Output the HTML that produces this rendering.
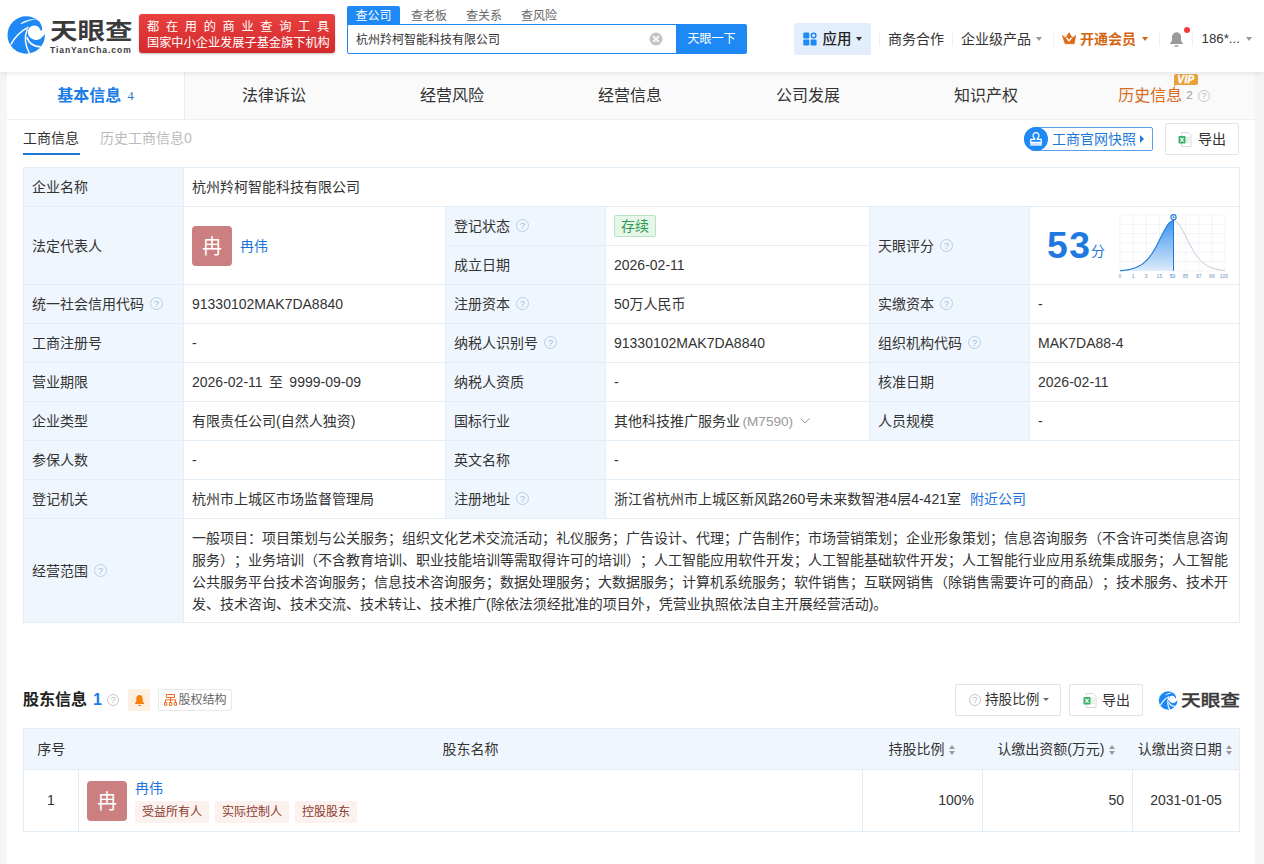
<!DOCTYPE html>
<html lang="zh-CN">
<head>
<meta charset="utf-8">
<title>杭州羚柯智能科技有限公司 - 天眼查</title>
<style>
*{box-sizing:border-box;margin:0;padding:0}
html,body{width:1264px;height:864px;overflow:hidden}
body{background:#f5f5f5;text-spacing-trim:space-all;font-family:"Liberation Sans","Noto Sans CJK SC",sans-serif;font-size:14px;color:#333;position:relative;line-height:1}
.abs{position:absolute}
a{color:#1c74dc;text-decoration:none}
/* header */
#hd{position:absolute;left:0;top:0;width:1264px;height:72px;background:#fff;box-shadow:0 1px 6px rgba(0,0,0,.10);z-index:5}
#main{position:absolute;left:7px;top:72px;width:1248px;height:800px;background:#fff}
/* tabs */
#tabs{position:absolute;left:0;top:0;width:1248px;height:48px;background:#fafafa;border-bottom:1px solid #efefef}
#tabs .t{position:absolute;top:0;height:48px;width:178px;text-align:center;line-height:47px;font-size:16px;color:#333;white-space:nowrap}
#tabs .t.on{background:#fff;color:#1a7ce6;font-weight:bold;border-right:1px solid #eee;height:47px}
/* info table */
table{border-collapse:collapse;table-layout:fixed}
#t1{position:absolute;left:16px;top:95px;width:1216px}
#t1 td{border:1px solid #e3edf6;height:39px;padding:0 8px 0 8px;font-size:14px;vertical-align:middle;white-space:nowrap;line-height:20px}
#t1 td.l{background:#f0f6fd;color:#333}
.q{display:inline-block;width:13px;height:13px;border:1px solid #b8cfe6;border-radius:50%;vertical-align:-1px;margin-left:6px;position:relative}
.q:after{content:"?";position:absolute;left:0;top:0;width:11px;line-height:11px;text-align:center;font-size:9.500px;color:#9dbbd8;font-family:"Liberation Sans",sans-serif}
.q.g{border-color:#c8c8c8;width:12px;height:12px}.q.g:after{color:#bbb;width:10px;line-height:10px;font-size:9px}
.av{display:inline-block;width:40px;height:40px;border-radius:4px;background:#cb7f80;color:#fff;font-size:20px;line-height:43px;text-align:center;vertical-align:middle}
/* t2 */
#t2{position:absolute;left:16px;top:656px;width:1216px}
#t2 th{background:#f0f6fd;height:41px;font-weight:normal;font-size:14px;color:#333;border:1px solid #e3edf6;border-left:none;border-right:none}
#t2 td{height:62px;border:1px solid #e3edf6;font-size:14px;padding-bottom:2px}
.btn{position:absolute;border:1px solid #e4e4e4;border-radius:2px;background:#fff;font-size:14px;color:#333}
.tag{display:inline-block;height:22px;line-height:22px;padding:0 7px;background:#fbf1ee;color:#8a3b2b;font-size:12px;border-radius:2px;margin-right:6px}
.sort{display:inline-block;width:6px;height:10px;position:relative;margin-left:4px;vertical-align:-1px}
.sort:before{content:"";position:absolute;left:0;top:0;border:3px solid transparent;border-bottom:4px solid #9a9a9e;border-top:none}
.sort:after{content:"";position:absolute;left:0;bottom:0;border:3px solid transparent;border-top:4px solid #9a9a9e;border-bottom:none}
</style>
</head>
<body>
<div id="hd">
<!-- logo -->
<svg class="abs" style="left:4px;top:12px" width="48" height="46" viewBox="4 12 48 46">
<circle cx="26.200" cy="35" r="18.700" fill="#1e88f5"/>
<path d="M27.900 32.600C27.900 28.500 30.500 25.400 34.200 25.400C36.300 25.400 38 26.200 39.100 27.400Q40.400 29 40.700 31L42.200 29.800Q42.400 27.500 41.300 25.300L39.800 21.300L48 21L48 33.300L44.900 33.300Q44.300 35 43.400 36.100Q41 39.300 37 39.900C33.500 40.300 27.900 38 27.900 32.600Z" fill="#fff"/>
<path d="M20.600 23.300Q28 18.900 36.500 19.100Q28 20.700 21.600 23.900Z" fill="#fff"/>
<path d="M10.800 44.600Q17 33 28.500 27.100" fill="none" stroke="#fff" stroke-width="1.600"/>
<path d="M27.400 29.300Q22.500 40 29.400 53.400" fill="none" stroke="#fff" stroke-width="1.500"/>
<path d="M26.900 37.200Q29.500 46 40.500 46.800" fill="none" stroke="#fff" stroke-width="1.700"/>
</svg>
<div class="abs" id="lg1" style="left:49.500px;top:17px;height:28px;font-size:23px;font-weight:700;color:#3a3a3a;line-height:28px;white-space:nowrap;transform-origin:0 50%;transform:scaleX(1.195)">天眼查</div>
<div class="abs" id="lg2" style="left:50px;top:45.500px;height:9px;font-size:8.500px;font-weight:bold;color:#3a3a3a;line-height:9px;white-space:nowrap;letter-spacing:0.950px">TianYanCha.com</div>
<!-- banner -->
<div class="abs" style="left:139px;top:14px;width:196px;height:39px;border-radius:3px;background:linear-gradient(#e8413f,#d32a2c);box-shadow:0 1px 2px rgba(0,0,0,.25)"></div>
<div class="abs" style="left:147px;top:19.500px;font-size:12.200px;color:#fff;line-height:15px;white-space:nowrap;letter-spacing:6.700px">都在用的商业查询工具</div>
<div class="abs" style="left:147px;top:35.500px;font-size:12.200px;color:#fff;line-height:15px;white-space:nowrap">国家中小企业发展子基金旗下机构</div>
<!-- search tabs -->
<div class="abs" style="left:347px;top:6px;width:53px;height:19px;background:#1e88f5;border-radius:2px 2px 0 0;color:#fff;font-size:12px;line-height:20px;text-align:center">查公司</div>
<div class="abs" style="left:411px;top:6px;font-size:12px;line-height:20px;color:#666">查老板</div>
<div class="abs" style="left:466px;top:6px;font-size:12px;line-height:20px;color:#666">查关系</div>
<div class="abs" style="left:521px;top:6px;font-size:12px;line-height:20px;color:#666">查风险</div>
<div class="abs" style="left:347px;top:24px;width:330px;height:30px;border:1px solid #1e88f5;border-radius:2px 0 0 2px;background:#fff;font-size:12px;line-height:30px;padding-left:8px;color:#333">杭州羚柯智能科技有限公司</div>
<svg class="abs" style="left:649px;top:32px" width="14" height="14" viewBox="0 0 14 14"><circle cx="7" cy="7" r="6.500" fill="#c4c4c4"/><path d="M4.600 4.600L9.400 9.400M9.400 4.600L4.600 9.400" stroke="#fff" stroke-width="1.500" stroke-linecap="round"/></svg>
<div class="abs" style="left:676px;top:24px;width:71px;height:30px;background:#1e88f5;border-radius:0 2px 2px 0;color:#fff;font-size:12px;line-height:30px;text-align:center">天眼一下</div>
<!-- right nav -->
<div class="abs" style="left:794px;top:23px;width:77px;height:32px;background:#e2eefb;border-radius:2px"></div>
<svg class="abs" style="left:803px;top:32px" width="14" height="14" viewBox="0 0 14 14"><rect x="0.300" y="0.500" width="6" height="6" rx="1.200" fill="#1e88f5"/><rect x="0.300" y="7.500" width="6" height="6" rx="1.200" fill="#1e88f5"/><rect x="7.600" y="7.500" width="6" height="6" rx="1.200" fill="#1e88f5"/><circle cx="10.600" cy="3.500" r="2.300" fill="none" stroke="#1e88f5" stroke-width="1.500"/></svg>
<div class="abs" style="left:822.500px;top:30px;font-size:14.500px;font-weight:500;line-height:18px;color:#222">应用</div>
<div class="abs caret" style="left:856px;top:37px;border:3.500px solid transparent;border-top:4px solid #333;border-bottom:none"></div>
<div class="abs" style="left:879px;top:33px;width:1px;height:13px;background:#f0f0f0"></div>
<div class="abs" style="left:888px;top:31px;font-size:14px;line-height:16px;color:#333">商务合作</div>
<div class="abs" style="left:952px;top:33px;width:1px;height:13px;background:#f0f0f0"></div>
<div class="abs" style="left:961px;top:31px;font-size:14px;line-height:16px;color:#333">企业级产品</div>
<div class="abs caret" style="left:1036px;top:37px;border:3.500px solid transparent;border-top:4px solid #999;border-bottom:none"></div>
<div class="abs" style="left:1053px;top:33px;width:1px;height:13px;background:#f0f0f0"></div>
<svg class="abs" style="left:1062px;top:32px" width="14" height="13" viewBox="0 0 14 13"><path d="M0.300 3.400L3.700 6L7 0.600L10.300 6L13.700 3.400L12.300 11.800H3.100Z" fill="#dc6a14" stroke="#dc6a14" stroke-width="0.600" stroke-linejoin="round"/><path d="M4.500 5.800L7 8.900L9.500 5.800" fill="none" stroke="#fff" stroke-width="1.400"/></svg>
<div class="abs" style="left:1080px;top:31px;font-size:14px;line-height:16px;color:#d5640f;font-weight:bold">开通会员</div>
<div class="abs caret" style="left:1142px;top:37px;border:3.500px solid transparent;border-top:4px solid #d5640f;border-bottom:none"></div>
<div class="abs" style="left:1159px;top:33px;width:1px;height:13px;background:#f0f0f0"></div>
<svg class="abs" style="left:1169px;top:31px" width="15" height="17" viewBox="0 0 15 17"><path d="M7.500 1.200C4.700 1.200 3 3.400 3 6V9.500L1.200 12.300V13H13.800V12.300L12 9.500V6C12 3.400 10.300 1.200 7.500 1.200Z" fill="#9a9a9a"/><rect x="5.500" y="14.200" width="4" height="1.600" rx="0.800" fill="#9a9a9a"/></svg>
<div class="abs" style="left:1184px;top:27px;width:6px;height:6px;border-radius:50%;background:#f23c3c"></div>
<div class="abs" style="left:1192px;top:33px;width:1px;height:13px;background:#f0f0f0"></div>
<div class="abs" style="left:1201.500px;top:31px;font-size:13.300px;line-height:16px;color:#333">186*...</div>
<div class="abs caret" style="left:1245.500px;top:37px;border:3.500px solid transparent;border-top:4px solid #999;border-bottom:none"></div>

</div>
<div id="main">
<div id="tabs">
<div class="t on" style="left:0">基本信息<span style="font-family:'Liberation Serif',serif;font-weight:normal;font-size:12.500px;margin-left:6px;vertical-align:1px;color:#2a70cf">4</span></div>
<div class="t" style="left:178px">法律诉讼</div>
<div class="t" style="left:356px">经营风险</div>
<div class="t" style="left:534px">经营信息</div>
<div class="t" style="left:712px">公司发展</div>
<div class="t" style="left:890px">知识产权</div>
<div class="t" style="left:1068px;color:#d96a1e">历史信息<span style="font-size:11.500px;color:#999;margin-left:4px;vertical-align:2px">2</span><span class="q g" style="vertical-align:-1px;margin-left:5px"></span></div>
<div class="abs" style="left:1167px;top:2px;width:24px;height:11px;background:#e9a23b;border-radius:2px;color:#fff;font-size:10px;font-weight:bold;font-style:italic;line-height:11.500px;text-align:center;letter-spacing:0.400px;-webkit-text-stroke:0.400px #fff">VIP</div>
<div class="abs" style="left:1167px;top:11px;width:0;height:0;border-left:4px solid #e9a23b;border-bottom:4px solid transparent"></div>

</div>
<div class="abs" style="left:16px;top:58px;font-size:14px;line-height:16px;color:#333">工商信息</div>
<div class="abs" style="left:16px;top:81px;width:57px;height:2px;background:#1e78d8"></div>
<div class="abs" style="left:93px;top:58px;font-size:14px;line-height:16px;color:#bbb">历史工商信息0</div>
<div class="abs" style="left:1017px;top:55px;width:129px;height:24px;border:1px solid #5a9fea;border-radius:12px 2px 2px 12px;background:#fff"></div>
<div class="abs" style="left:1017px;top:55px;width:24px;height:24px;border-radius:50%;background:#1e88f5"></div>
<svg class="abs" style="left:1022px;top:59px" width="14" height="16" viewBox="0 0 14 16"><path d="M5.700 8.400V7.400A3 3 0 1 1 8.300 7.400V8.400H12.300V11.400H1.700V8.400Z" fill="none" stroke="#fff" stroke-width="1.200" stroke-linejoin="round"/><rect x="1.100" y="11.400" width="11.800" height="3.400" rx="0.500" fill="#fff" opacity="0.780"/></svg>
<div class="abs" style="left:1045px;top:59px;font-size:14px;line-height:16px;color:#1e78d8">工商官网快照</div>
<div class="abs" style="left:1133px;top:63px;border:4px solid transparent;border-left:4px solid #1e78d8;border-right:none"></div>
<div class="btn" style="left:1158px;top:51px;width:74px;height:32px"></div>
<svg class="abs xls" style="left:1171px;top:60px" width="14" height="15" viewBox="0 0 14 15"><path d="M3.500 0.500H10L13 3.500V14.500H3.500Z" fill="#fff" stroke="#cfcfcf" stroke-width="0.800"/><rect x="8" y="5" width="3.500" height="1.200" fill="#cfe8d6"/><rect x="8" y="7.200" width="3.500" height="1.200" fill="#cfe8d6"/><rect x="8" y="9.400" width="3.500" height="1.200" fill="#cfe8d6"/><rect x="0.500" y="4" width="7" height="7.500" rx="0.800" fill="#3cb06c"/><path d="M2.400 5.800L5.600 9.700M5.600 5.800L2.400 9.700" stroke="#fff" stroke-width="1.100"/></svg>
<div class="abs" style="left:1191px;top:59px;font-size:14px;line-height:16px;color:#333">导出</div>

<table id="t1">
<colgroup><col style="width:160px"><col style="width:262px"><col style="width:160px"><col style="width:264px"><col style="width:160px"><col style="width:210px"></colgroup>
<tr><td class="l">企业名称</td><td colspan="5">杭州羚柯智能科技有限公司</td></tr>
<tr><td class="l" rowspan="2">法定代表人</td><td rowspan="2"><span class="av">冉</span><a style="margin-left:8px;vertical-align:middle">冉伟</a></td><td class="l">登记状态<span class="q"></span></td><td><span style="display:inline-block;height:22px;line-height:20px;padding:0 6px;border:1px solid #b7e3c3;background:#e6f7ea;color:#2e9a4f;font-size:14px;border-radius:2px">存续</span></td><td class="l" rowspan="2">天眼评分<span class="q"></span></td><td rowspan="2" style="position:relative;padding:0"><div class="abs" style="left:17px;top:17px;font-size:36px;font-weight:bold;color:#1e78e0;line-height:44px;letter-spacing:1.400px;transform-origin:0 50%;transform:scaleX(1.035)">53</div><div class="abs" style="left:61px;top:36px;font-size:14px;color:#1e78e0;line-height:16px">分</div><svg class="abs" style="left:88px;top:6px" width="112" height="66" viewBox="0 0 112 66"><defs><linearGradient id="sg" x1="0" y1="0" x2="0" y2="1"><stop offset="0" stop-color="#3d95f0"/><stop offset="1" stop-color="#dcebfb"/></linearGradient></defs><path d="M2.0 2.0V57.8M15.1 2.0V57.8M28.2 2.0V57.8M41.4 2.0V57.8M54.5 2.0V57.8M67.6 2.0V57.8M80.8 2.0V57.8M93.9 2.0V57.8M107.0 2.0V57.8M2.0 2.0H107.0M2.0 11.3H107.0M2.0 20.6H107.0M2.0 29.9H107.0M2.0 39.2H107.0M2.0 48.5H107.0M2.0 57.8H107.0" stroke="#e6ecf3" stroke-width="0.6" fill="none"/><path d="M2.0 57.8 L3.8 57.6 L5.5 57.4 L7.2 57.2 L9.0 56.9 L10.8 56.6 L12.5 56.2 L14.2 55.8 L16.0 55.2 L17.8 54.6 L19.5 53.8 L21.2 53.0 L23.0 51.9 L24.8 50.7 L26.5 49.3 L28.2 47.6 L30.0 45.8 L31.8 43.6 L33.5 41.2 L35.2 38.6 L37.0 35.6 L38.8 32.4 L40.5 29.0 L42.2 25.5 L44.0 22.0 L45.8 18.6 L47.5 15.4 L49.2 12.5 L51.0 10.2 L52.8 8.6 L54.5 7.7 L55.5 7.6 L55.5 57.8 L2.0 57.8Z" fill="url(#sg)"/><path d="M55.5 7.6 L56.3 7.7 L58.0 8.4 L59.8 10.0 L61.5 12.2 L63.3 14.9 L65.0 18.1 L66.8 21.5 L68.5 25.0 L70.2 28.5 L72.0 31.9 L73.8 35.2 L75.5 38.1 L77.2 40.9 L79.0 43.3 L80.8 45.5 L82.5 47.4 L84.2 49.1 L86.0 50.5 L87.8 51.8 L89.5 52.8 L91.2 53.7 L93.0 54.5 L94.8 55.2 L96.5 55.7 L98.2 56.2 L100.0 56.6 L101.8 56.9 L103.5 57.2 L105.2 57.4 L107.0 57.6" stroke="#c6cbd1" stroke-width="1" fill="none"/><path d="M2.0 57.8 L3.8 57.6 L5.5 57.4 L7.2 57.2 L9.0 56.9 L10.8 56.6 L12.5 56.2 L14.2 55.8 L16.0 55.2 L17.8 54.6 L19.5 53.8 L21.2 53.0 L23.0 51.9 L24.8 50.7 L26.5 49.3 L28.2 47.6 L30.0 45.8 L31.8 43.6 L33.5 41.2 L35.2 38.6 L37.0 35.6 L38.8 32.4 L40.5 29.0 L42.2 25.5 L44.0 22.0 L45.8 18.6 L47.5 15.4 L49.2 12.5 L51.0 10.2 L52.8 8.6 L54.5 7.7 L55.5 7.6" stroke="#1e78d8" stroke-width="1.1" fill="none"/><path d="M55.5 4.6V57.8" stroke="#1e78d8" stroke-width="1"/><circle cx="55.5" cy="4.2" r="2.6" fill="#fff" stroke="#1e78d8" stroke-width="1.1"/><circle cx="55.5" cy="4.2" r="0.9" fill="#1e78d8"/><text x="2.0" y="64.5" font-size="5" fill="#6f90b8" text-anchor="middle" font-family="Liberation Sans,sans-serif">0</text><text x="15.1" y="64.5" font-size="5" fill="#6f90b8" text-anchor="middle" font-family="Liberation Sans,sans-serif">1</text><text x="28.2" y="64.5" font-size="5" fill="#6f90b8" text-anchor="middle" font-family="Liberation Sans,sans-serif">3</text><text x="41.4" y="64.5" font-size="5" fill="#6f90b8" text-anchor="middle" font-family="Liberation Sans,sans-serif">15</text><text x="54.5" y="64.5" font-size="5" fill="#2a7ad8" text-anchor="middle" font-family="Liberation Sans,sans-serif">50</text><text x="67.6" y="64.5" font-size="5" fill="#6f90b8" text-anchor="middle" font-family="Liberation Sans,sans-serif">85</text><text x="80.8" y="64.5" font-size="5" fill="#6f90b8" text-anchor="middle" font-family="Liberation Sans,sans-serif">97</text><text x="93.9" y="64.5" font-size="5" fill="#6f90b8" text-anchor="middle" font-family="Liberation Sans,sans-serif">99</text><text x="105.8" y="64.5" font-size="5" fill="#6f90b8" text-anchor="middle" font-family="Liberation Sans,sans-serif">100</text></svg></td></tr>
<tr><td class="l">成立日期</td><td>2026-02-11</td></tr>
<tr><td class="l">统一社会信用代码<span class="q"></span></td><td>91330102MAK7DA8840</td><td class="l">注册资本<span class="q"></span></td><td>50万人民币</td><td class="l">实缴资本<span class="q"></span></td><td>-</td></tr>
<tr><td class="l">工商注册号</td><td>-</td><td class="l">纳税人识别号<span class="q"></span></td><td>91330102MAK7DA8840</td><td class="l">组织机构代码<span class="q"></span></td><td>MAK7DA88-4</td></tr>
<tr><td class="l">营业期限</td><td style="word-spacing:2.500px">2026-02-11 至 9999-09-09</td><td class="l">纳税人资质</td><td>-</td><td class="l">核准日期</td><td>2026-02-11</td></tr>
<tr><td class="l">企业类型</td><td>有限责任公司(自然人独资)</td><td class="l">国标行业</td><td>其他科技推广服务业<span style="color:#999;margin-left:2.500px;font-size:13.600px">(M7590)</span><svg width="10" height="6" viewBox="0 0 10 6" style="margin-left:7px;vertical-align:2px"><path d="M0.500 0.500L5 5L9.500 0.500" fill="none" stroke="#999" stroke-width="1"/></svg></td><td class="l">人员规模</td><td>-</td></tr>
<tr><td class="l">参保人数</td><td>-</td><td class="l">英文名称</td><td colspan="3">-</td></tr>
<tr><td class="l">登记机关</td><td>杭州市上城区市场监督管理局</td><td class="l">注册地址<span class="q"></span></td><td colspan="3">浙江省杭州市上城区新风路260号未来数智港4层4-421室<a style="margin-left:9px">附近公司</a></td></tr>
<tr><td class="l" style="height:104px">经营范围<span class="q"></span></td><td colspan="5" style="white-space:nowrap;line-height:22px;padding-right:0">一般项目：项目策划与公关服务；组织文化艺术交流活动；礼仪服务；广告设计、代理；广告制作；市场营销策划；企业形象策划；信息咨询服务（不含许可类信息咨询<br>服务）；业务培训（不含教育培训、职业技能培训等需取得许可的培训）；人工智能应用软件开发；人工智能基础软件开发；人工智能行业应用系统集成服务；人工智能<br>公共服务平台技术咨询服务；信息技术咨询服务；数据处理服务；大数据服务；计算机系统服务；软件销售；互联网销售（除销售需要许可的商品）；技术服务、技术开<br>发、技术咨询、技术交流、技术转让、技术推广(除依法须经批准的项目外，凭营业执照依法自主开展经营活动)。</td></tr>
</table>

<div class="abs" style="left:16px;top:619px;font-size:16px;font-weight:bold;line-height:18px;color:#222">股东信息</div>
<div class="abs" style="left:86px;top:619px;font-size:16px;font-weight:bold;line-height:18px;color:#1a7ce6">1</div>
<span class="q g" style="position:absolute;left:100px;top:622px;margin:0"></span>
<div class="abs" style="left:121px;top:617px;width:22px;height:22px;background:#fdf0e3;border-radius:2px"></div>
<svg class="abs" style="left:126.500px;top:621.500px" width="11" height="12.800" viewBox="0 0 12 14"><path d="M6 1C3.800 1 2.500 2.800 2.500 5V8L1 10.300V11H11V10.300L9.500 8V5C9.500 2.800 8.200 1 6 1Z" fill="#f5820b"/><rect x="4.500" y="11.800" width="3" height="1.300" rx="0.600" fill="#f5820b"/></svg>
<div class="btn" style="left:151px;top:617px;width:74px;height:22px;border-color:#e8e8e8"></div>
<svg class="abs" style="left:157px;top:622px" width="13" height="12" viewBox="0 0 13 12"><path d="M2.500 0.500H10.500V3.500H2.500ZM6.500 3.500V8M1.500 8V5.800H11.500V8M0.500 8.500H2.800V11.300H0.500ZM5.300 8.500H7.700V11.300H5.300ZM10.200 8.500H12.500V11.300H10.200Z" fill="none" stroke="#ea6a22" stroke-width="1"/></svg>
<div class="abs" style="left:171.500px;top:620px;font-size:12px;line-height:16px;color:#666">股权结构</div>

<div class="btn" style="left:948px;top:612px;width:106px;height:32px"></div>
<span class="q g" style="position:absolute;left:962px;top:622px;margin:0"></span>
<div class="abs" style="left:978px;top:620px;font-size:13.600px;line-height:16px;color:#333">持股比例</div>
<div class="abs" style="left:1035.500px;top:625.500px;border:3.500px solid transparent;border-top:3.500px solid #666;border-bottom:none"></div>
<div class="btn" style="left:1062px;top:612px;width:74px;height:32px"></div>
<svg class="abs xls" style="left:1076px;top:621px" width="14" height="15" viewBox="0 0 14 15"><path d="M3.500 0.500H10L13 3.500V14.500H3.500Z" fill="#fff" stroke="#cfcfcf" stroke-width="0.800"/><rect x="8" y="5" width="3.500" height="1.200" fill="#cfe8d6"/><rect x="8" y="7.200" width="3.500" height="1.200" fill="#cfe8d6"/><rect x="8" y="9.400" width="3.500" height="1.200" fill="#cfe8d6"/><rect x="0.500" y="4" width="7" height="7.500" rx="0.800" fill="#3cb06c"/><path d="M2.400 5.800L5.600 9.700M5.600 5.800L2.400 9.700" stroke="#fff" stroke-width="1.100"/></svg>
<div class="abs" style="left:1095px;top:620px;font-size:14px;line-height:16px;color:#333">导出</div>
<svg class="abs" style="left:1150px;top:617px" width="24" height="23" viewBox="4 12 48 46">
<circle cx="26.200" cy="35" r="18.700" fill="#1e88f5"/>
<path d="M27.900 32.600C27.900 28.500 30.500 25.400 34.200 25.400C36.300 25.400 38 26.200 39.100 27.400Q40.400 29 40.700 31L42.200 29.800Q42.400 27.500 41.300 25.300L39.800 21.300L48 21L48 33.300L44.900 33.300Q44.300 35 43.400 36.100Q41 39.300 37 39.900C33.500 40.300 27.900 38 27.900 32.600Z" fill="#fff"/>
<path d="M20.600 23.300Q28 18.500 36.500 18.900Q28 21 21.600 24.300Z" fill="#fff"/>
<path d="M10.800 44.600Q17 33 28.500 27.100" fill="none" stroke="#fff" stroke-width="2.200"/>
<path d="M27.400 29.300Q22.500 40 29.400 53.400" fill="none" stroke="#fff" stroke-width="2.200"/>
<path d="M26.900 37.200Q29.500 46 40.500 46.800" fill="none" stroke="#fff" stroke-width="2.300"/>
</svg>
<div class="abs" style="left:1173.500px;top:617.500px;font-size:16px;font-weight:500;-webkit-text-stroke:0.350px #3a3a3a;color:#3a3a3a;line-height:22px;white-space:nowrap;transform-origin:0 50%;transform:scaleX(1.23)">天眼查</div>

<table id="t2">
<colgroup><col style="width:55px"><col style="width:784px"><col style="width:120px"><col style="width:150px"><col style="width:107px"></colgroup>
<tr><th style="border-left:1px solid #e3edf6">序号</th><th>股东名称</th><th style="text-align:right;padding-right:28px">持股比例<span class="sort"></span></th><th style="text-align:right;padding-right:18px">认缴出资额(万元)<span class="sort"></span></th><th style="border-right:1px solid #e3edf6;white-space:nowrap;padding-right:2px">认缴出资日期<span class="sort"></span></th></tr>
<tr><td style="text-align:center">1</td><td style="position:relative"><span class="av abs" style="left:8px;top:11px">冉</span><a class="abs" style="left:56px;top:10px;line-height:16px">冉伟</a><div class="abs" style="left:56px;top:31px;white-space:nowrap"><span class="tag">受益所有人</span><span class="tag">实际控制人</span><span class="tag">控股股东</span></div></td><td style="text-align:right;padding-right:8px">100%</td><td style="text-align:right;padding-right:8px">50</td><td style="text-align:center">2031-01-05</td></tr>
</table>

</div>
</body>
</html>
